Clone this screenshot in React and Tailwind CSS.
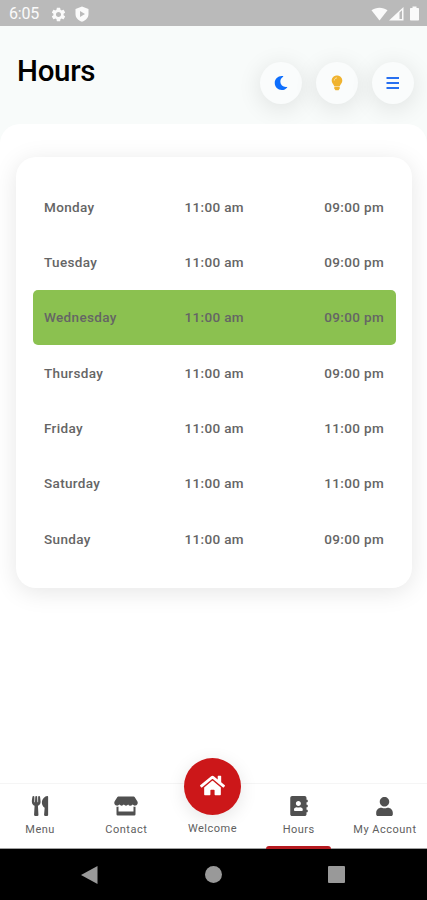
import React from "react";
import { FaUtensils, FaHome, FaAddressBook, FaUser, FaMoon } from "react-icons/fa";
import { MdSettings } from "react-icons/md";

const hours = [
  { day: "Monday", open: "11:00 am", close: "09:00 pm" },
  { day: "Tuesday", open: "11:00 am", close: "09:00 pm" },
  { day: "Wednesday", open: "11:00 am", close: "09:00 pm", today: true },
  { day: "Thursday", open: "11:00 am", close: "09:00 pm" },
  { day: "Friday", open: "11:00 am", close: "11:00 pm" },
  { day: "Saturday", open: "11:00 am", close: "11:00 pm" },
  { day: "Sunday", open: "11:00 am", close: "09:00 pm" },
];

function StoreIcon() {
  return (
    <svg width="24" height="20" viewBox="0 0 24 20" fill="currentColor">
      <path d="M4.300.5h15.400q.6 0 .9.5l2.700 4.200c1 1.700.2 4.100-1.800 4.400-1.200.2-2.100-.3-2.800-1.100-1.700 1.600-3.600 1.600-4.500 0-1.200 1.500-3.200 1.500-4.400 0-1.200 1.600-3.200 1.500-4.400 0-.8.800-1.700 1.300-2.900 1.100-2-.3-2.800-2.700-1.800-4.400L3.400 1q.3-.5.900-.5Z" />
      <path d="M2.500 10.700q1 .2 2-.1v4.900h15v-4.900q1 .3 2 .1v7.600q0 1.200-1.200 1.200H3.700q-1.200 0-1.200-1.200Z" />
    </svg>
  );
}

function BulbIcon() {
  return (
    <svg width="12" height="16" viewBox="0 0 12 16" fill="#f0b32f">
      <path d="M6 .5c3 0 5.300 2.200 5.300 5.200 0 2.400-1.800 3.500-2.500 5.300H3.200C2.500 9.200.7 8.100.7 5.700.7 2.700 3 .5 6 .5Z" />
      <path d="M3.300 5.500C3.300 4 4.300 2.900 5.900 2.900" fill="none" stroke="#fbe3ae" strokeWidth="1" />
      <path d="M3.300 11.400h5.400v2L7.600 15.200H4.400L3.300 13.400Z" />
    </svg>
  );
}

const tabs = [
  { name: "Menu", icon: <FaUtensils size={20} /> },
  { name: "Contact", icon: <StoreIcon /> },
  { name: "Welcome", icon: <FaHome size={25} />, main: true },
  { name: "Hours", icon: <FaAddressBook size={20} />, active: true },
  { name: "My Account", icon: <FaUser size={19} /> },
];

function StatusBar() {
  return (
    <div className="flex h-[26px] items-center bg-[#bababa] pl-[9px] pr-[7px] pt-[2px] text-[#fafafa]">
      <span className="w-[31px] text-[16px] leading-none tracking-[-0.2px]">6:05</span>
      <MdSettings size={17} className="ml-[10px]" />
      <svg className="ml-2" width="14" height="16" viewBox="0 0 14 16" fill="currentColor">
        <path
          fillRule="evenodd"
          d="M7 .5 13.5 3v5c0 3.8-2.7 6.5-6.5 7.7C3.200 14.500.5 11.800.5 8V3ZM5 5v6l5-3Z"
        />
      </svg>
      <svg className="ml-auto" width="50" height="16" viewBox="0 0 50 16" fill="currentColor">
        <path d="M1.500 4.300C6 .8 13 .8 17.500 4.300L9.500 14.500Z" />
        <path fillRule="evenodd" d="M19 14.500 33.500 1v13.500ZM29.500 6.500V13H32V4.200Z" />
        <path d="M42.500.5h4V2h1.800q.7 0 .7.700v11.100q0 .7-.7.700h-7.600q-.7 0-.7-.7V2.700q0-.7.700-.7h1.800Z" />
      </svg>
    </div>
  );
}

function RoundButton({ children }) {
  return (
    <button className="flex size-[42px] items-center justify-center rounded-full bg-[#fafcfc] text-[#0d6efd] shadow-[0_4px_24px_rgba(0,0,0,0.11)]">
      {children}
    </button>
  );
}

function HoursCard() {
  return (
    <div className="mx-4 mr-[15px] mt-[33px] h-[431px] rounded-[20px] bg-white px-[17px] pr-4 pt-[22px] shadow-[0_4px_24px_rgba(0,0,0,0.1)]">
      {hours.map((row) => (
        <div
          key={row.day}
          className={`flex h-[55.35px] items-center rounded-[5px] pl-[11px] pr-3 text-[13.5px] font-medium tracking-[0.35px] text-[#656565] ${
            row.today ? "bg-[#8bc150]" : ""
          }`}
        >
          <span className="w-[140.5px]">{row.day}</span>
          <span>{row.open}</span>
          <span className="ml-auto">{row.close}</span>
        </div>
      ))}
    </div>
  );
}

function TabBar() {
  return (
    <nav className="h-[66px] border-t border-[#f5f5f5] border-b border-b-[#a0a0a0] bg-white">
      <div className="-ml-[3px] -mr-px flex h-full">
        {tabs.map((tab) => (
          <div key={tab.name} className="relative flex flex-1 flex-col items-center text-[#505050]">
            {tab.main ? (
              <div className="-mt-[26px] flex size-[57px] shrink-0 items-center justify-center rounded-full bg-[#cc1719] pb-[3px] text-white shadow-[0_4px_18px_rgba(0,0,0,0.1)]">
                {tab.icon}
              </div>
            ) : (
              <div className="mt-3 flex h-[20px] items-center">{tab.icon}</div>
            )}
            <span className="mt-[7px] whitespace-nowrap text-[11px] leading-[14px] tracking-[0.5px] text-[#606060]">
              {tab.name}
            </span>
            {tab.active && <div className="absolute -bottom-px h-[3px] w-[65px] rounded-t-sm bg-[#b51a20]" />}
          </div>
        ))}
      </div>
    </nav>
  );
}

export default function App() {
  return (
    <div className="flex h-[900px] w-[427px] flex-col overflow-hidden bg-[#f8fbfa] font-['Roboto',sans-serif]">
      <StatusBar />
      <header className="flex h-[98px] shrink-0 justify-between pl-[17px] pr-[13px]">
        <h1 className="mt-[27px] text-[29.5px] font-medium leading-9 tracking-[-0.3px] text-black">Hours</h1>
        <div className="mt-9 flex gap-[14px]">
          <RoundButton>
            <FaMoon size={14} />
          </RoundButton>
          <RoundButton>
            <BulbIcon />
          </RoundButton>
          <RoundButton>
            <svg width="14" height="12" viewBox="0 0 14 12" stroke="#2870f0" strokeWidth="2">
              <path d="M.5 1h12.500M.5 6h12.500M.5 11h12.500" />
            </svg>
          </RoundButton>
        </div>
      </header>
      <main className="relative flex-1 overflow-hidden rounded-t-[20px] bg-white">
        <HoursCard />
      </main>
      <div className="relative">
        <TabBar />
      </div>
      <div className="flex h-[51px] shrink-0 items-center bg-black pl-[81px]">
        <svg width="17" height="18" viewBox="0 0 17 18" fill="#999">
          <path d="M16.500 0v18L0 9Z" />
        </svg>
        <div className="ml-[107px] size-[17px] rounded-full bg-[#999]" />
        <div className="ml-[106px] size-[17px] rounded-[1px] bg-[#999]" />
      </div>
    </div>
  );
}
